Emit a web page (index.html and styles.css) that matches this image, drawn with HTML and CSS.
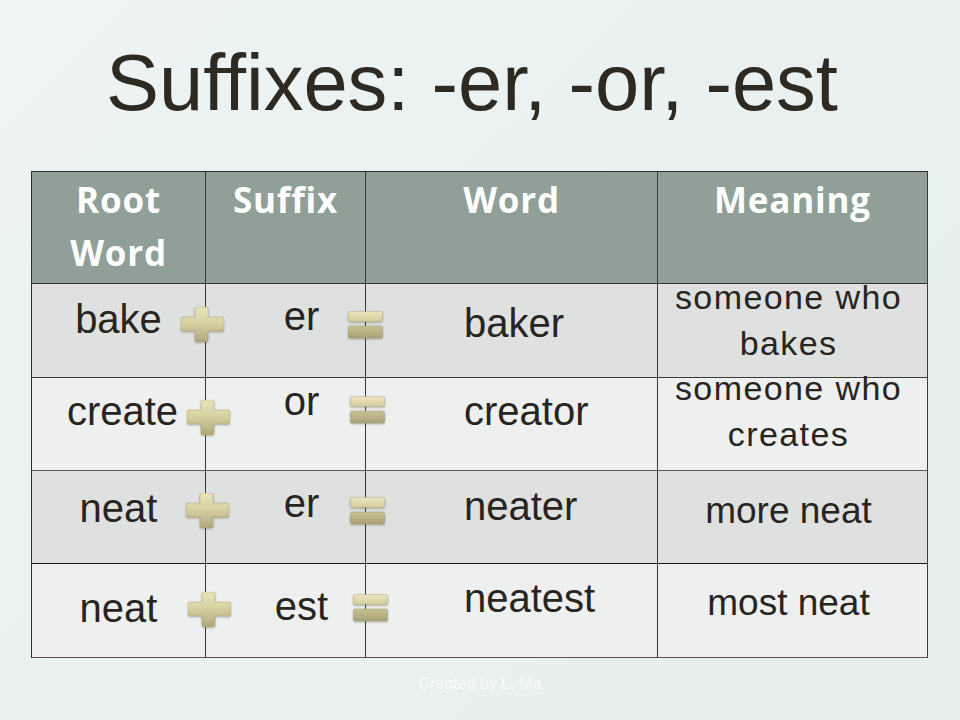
FILE: index.html
```html
<!DOCTYPE html>
<html lang="en">
<head>
<meta charset="utf-8">
<title>Suffixes: -er, -or, -est</title>
<link rel="stylesheet" href="styles.css">
</head>
<body>
<svg class="defs" width="0" height="0" aria-hidden="true">
  <defs>
    <linearGradient id="gPlus" gradientUnits="userSpaceOnUse" x1="0" y1="0" x2="0" y2="35">
      <stop offset="0" stop-color="#e9e5b8"/>
      <stop offset="0.45" stop-color="#d8d2a2"/>
      <stop offset="1" stop-color="#aea77b"/>
    </linearGradient>
    <linearGradient id="gEqTop" x1="0" y1="0" x2="0" y2="1">
      <stop offset="0" stop-color="#ebe7bd"/>
      <stop offset="1" stop-color="#d3cd9c"/>
    </linearGradient>
    <linearGradient id="gEqBot" x1="0" y1="0" x2="0" y2="1">
      <stop offset="0" stop-color="#c8c191"/>
      <stop offset="1" stop-color="#a9a278"/>
    </linearGradient>
    <symbol id="plus" viewBox="0 0 43 35">
      <path d="M16 0h9a2 2 0 0 1 2 2v8h14a2 2 0 0 1 2 2v10a2 2 0 0 1-2 2h-14v9a2 2 0 0 1-2 2h-9a2 2 0 0 1-2-2v-9h-12a2 2 0 0 1-2-2v-10a2 2 0 0 1 2-2h12v-8a2 2 0 0 1 2-2z" fill="url(#gPlus)" stroke="#a49d72" stroke-opacity="0.5" stroke-width="0.8"/>
    </symbol>
    <symbol id="equals" viewBox="0 0 35 28">
      <rect x="0.5" y="0.5" width="34" height="10" rx="1.5" fill="url(#gEqTop)" stroke="#b0a97d" stroke-opacity="0.5" stroke-width="0.8"/>
      <rect x="0.5" y="15" width="34" height="12" rx="1.5" fill="url(#gEqBot)" stroke="#9c9570" stroke-opacity="0.5" stroke-width="0.8"/>
    </symbol>
  </defs>
</svg>

<div class="slide">
  <h1 class="title">Suffixes: -er, -or, -est</h1>

  <div class="table">
    <div class="row head">
      <div class="cell c1">Root<br>Word</div>
      <div class="cell c2">Suffix</div>
      <div class="cell c3">Word</div>
      <div class="cell c4">Meaning</div>
    </div>

    <div class="row dark r1">
      <div class="cell c1">bake</div>
      <div class="cell c2">er</div>
      <div class="cell c3">baker</div>
      <div class="cell c4"><span class="small">someone who<br>bakes</span></div>
      <svg class="op plus"><use href="#plus"/></svg>
      <svg class="op eq"><use href="#equals"/></svg>
    </div>

    <div class="row light r2">
      <div class="cell c1">create</div>
      <div class="cell c2">or</div>
      <div class="cell c3">creator</div>
      <div class="cell c4"><span class="small">someone who<br>creates</span></div>
      <svg class="op plus"><use href="#plus"/></svg>
      <svg class="op eq"><use href="#equals"/></svg>
    </div>

    <div class="row dark r3">
      <div class="cell c1">neat</div>
      <div class="cell c2">er</div>
      <div class="cell c3">neater</div>
      <div class="cell c4 mid">more neat</div>
      <svg class="op plus"><use href="#plus"/></svg>
      <svg class="op eq"><use href="#equals"/></svg>
    </div>

    <div class="row light r4">
      <div class="cell c1">neat</div>
      <div class="cell c2">est</div>
      <div class="cell c3">neatest</div>
      <div class="cell c4 mid">most neat</div>
      <svg class="op plus"><use href="#plus"/></svg>
      <svg class="op eq"><use href="#equals"/></svg>
    </div>
  </div>

  <footer class="credit">Created by L. Ma</footer>
</div>
</body>
</html>
```

FILE: styles.css
```css
* { box-sizing: border-box; }

html, body {
  margin: 0;
  padding: 0;
}

body {
  background: #e9f1f1;
  font-family: "Liberation Sans", Arial, sans-serif;
  color: #28241e;
}

.defs {
  position: absolute;
  width: 0;
  height: 0;
  overflow: hidden;
}

.slide {
  width: 960px;
  height: 720px;
  overflow: hidden;
  background: linear-gradient(135deg, #eef4f4 0%, #e8f0f0 60%, #e6eeee 100%);
}

.title {
  margin: 0;
  padding: 38px 0 0 106px;
  font-weight: normal;
  font-size: 79.5px;
  line-height: 90px;
  color: #2d2a22;
  white-space: nowrap;
}

.table {
  margin: 43px 0 0 31px;
  width: 897px;
  border-left: 1px solid #2f2f2f;
  border-top: 1px solid #2f2f2f;
}

.row {
  display: grid;
  grid-template-columns: 174px 160px 292px 270px;
  position: relative;
}

.cell {
  border-right: 1px solid #3a3a3a;
  border-bottom: 1px solid #3a3a3a;
  font-size: 40px;
  line-height: 46px;
  white-space: nowrap;
}

.head { height: 112px; }
.r1 { height: 94px; }
.r2 { height: 93px; }
.r3 { height: 93px; }
.r4 { height: 94px; }

.head { background: #909f98; }
.dark { background: #dfe0e0; }
.light { background: #eef0f0; }

.head .cell {
  font-family: "Open Sans", "Liberation Sans", sans-serif;
  font-weight: 700;
  font-size: 35px;
  letter-spacing: 0.8px;
  line-height: 53px;
  color: #ffffff;
  text-align: center;
  padding-top: 1px;
  border-bottom-color: #2f2f2f;
}

.r2 .cell { border-bottom-color: #5a5a5a; }
.r3 .cell { border-bottom-color: #1e1e1e; }
.r4 .cell { border-bottom-color: #555555; }

/* column alignment */
.row:not(.head) .c1 { text-align: center; }
.row:not(.head) .c2 { text-align: center; padding-left: 32px; }
.row:not(.head) .c3 { text-align: left; padding-left: 98px; }
.row:not(.head) .c4 { text-align: center; padding-right: 8px; }

.small {
  display: block;
  font-size: 34px;
  line-height: 46px;
  letter-spacing: 1.4px;
}

.mid {
  font-size: 37px;
  line-height: 46px;
}

/* vertical placement per row */
.r1 .c1 { padding-top: 12px; }
.r1 .c2 { padding-top: 9px; }
.r1 .c3 { padding-top: 16px; }
.r1 .small { margin-top: -10px; }

.r2 .c1 { padding-top: 10px; padding-left: 8px; }
.r2 .c2 { padding-top: 0; }
.r2 .c3 { padding-top: 10px; padding-left: 94px; }
.r2 .small { margin-top: -13px; }

.r3 .c1 { padding-top: 14px; }
.r3 .c2 { padding-top: 9px; }
.r3 .c3 { padding-top: 12px; padding-left: 101px; }
.r3 .c4 { padding-top: 17px; }

.r4 .c1 { padding-top: 21px; }
.r4 .c2 { padding-top: 19px; padding-left: 40px; }
.r4 .c3 { padding-top: 11px; padding-left: 99px; }
.r4 .c4 { padding-top: 16px; }

/* operator icons sitting over the column borders */
.op {
  position: absolute;
  filter: drop-shadow(0 1px 1px rgba(60, 55, 30, 0.35));
}

.plus { width: 43px; height: 35px; }
.eq { width: 35px; height: 28px; }

.r1 .plus { left: 149px; top: 23px; }
.r1 .eq { left: 316px; top: 27px; }
.r2 .plus { left: 155px; top: 22px; }
.r2 .eq { left: 318px; top: 18px; }
.r3 .plus { left: 154px; top: 22px; }
.r3 .eq { left: 318px; top: 26px; }
.r4 .plus { left: 156px; top: 28px; }
.r4 .eq { left: 321px; top: 30px; }

.credit {
  margin-top: 17px;
  text-align: center;
  font-size: 16px;
  line-height: 18px;
  color: #f9fbfb;
}
```
